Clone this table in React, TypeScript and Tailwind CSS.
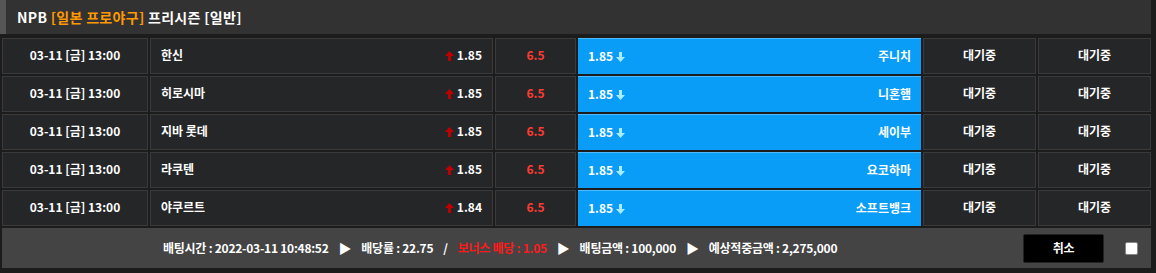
import React from "react";

type Game = {
  time: string;
  home: string;
  homeOdds: string;
  line: string;
  awayOdds: string;
  away: string;
};

const games: Game[] = [
  { time: "03-11 [금] 13:00", home: "한신", homeOdds: "1.85", line: "6.5", awayOdds: "1.85", away: "주니치" },
  { time: "03-11 [금] 13:00", home: "히로시마", homeOdds: "1.85", line: "6.5", awayOdds: "1.85", away: "니혼햄" },
  { time: "03-11 [금] 13:00", home: "지바 롯데", homeOdds: "1.85", line: "6.5", awayOdds: "1.85", away: "세이부" },
  { time: "03-11 [금] 13:00", home: "라쿠텐", homeOdds: "1.85", line: "6.5", awayOdds: "1.85", away: "요코하마" },
  { time: "03-11 [금] 13:00", home: "야쿠르트", homeOdds: "1.84", line: "6.5", awayOdds: "1.85", away: "소프트뱅크" },
];

function UpArrow() {
  return (
    <svg width="9" height="10" viewBox="0 0 9 10" className="mt-[2px]">
      <path d="M4.5 0 L9 5 L6 5 L6 10 L3 10 L3 5 L0 5 Z" fill="#c00000" />
    </svg>
  );
}

function DownArrow() {
  return (
    <svg width="9" height="10" viewBox="0 0 9 10" className="mt-[2px]">
      <path d="M4.5 10 L9 5 L6 5 L6 0 L3 0 L3 5 L0 5 Z" fill="#a8ecff" />
    </svg>
  );
}

function Play() {
  return <span className="mx-[10px] text-[13px]">▶</span>;
}

const cell = "h-full bg-[#252628] border border-[#3a3a3a] flex items-center pb-[2px]";

export default function App() {
  return (
    <div
      className="w-[1156px] h-[273px] bg-[#1c1c1c] text-white text-[12px] font-semibold overflow-hidden"
      style={{ fontFamily: '"Noto Sans CJK KR", "Noto Sans", sans-serif' }}
    >
      <div className="w-[1151px] h-[34px] bg-[#323232] border-l-[6px] border-[#555555] flex items-center pl-[11px] text-[14px] font-bold tracking-[0.3px]">
        <span>NPB&nbsp;</span>
        <span className="text-[#ff9900]">[일본 프로야구]</span>
        <span>&nbsp;프리시즌 [일반]</span>
      </div>

      <div className="w-[1151px] pl-[2px] pt-[4px] flex flex-col gap-[2px]">
        {games.map((g, i) => (
          <div key={i} className="h-[36px] flex gap-[2px]">
            <div className={`${cell} w-[146px] justify-center`}>{g.time}</div>
            <div className={`${cell} w-[343px] justify-between px-[10px]`}>
              <span>{g.home}</span>
              <span className="flex items-center gap-[3px]">
                <UpArrow />
                {g.homeOdds}
              </span>
            </div>
            <div className={`${cell} w-[81px] justify-center text-[#ff3b30]`}>{g.line}</div>
            <div className="h-full w-[343px] bg-[#0a9df7] border-t border-[#4fbaff] flex items-center justify-between px-[10px] pb-[2px]">
              <span className="flex items-center gap-[3px]">
                {g.awayOdds}
                <DownArrow />
              </span>
              <span>{g.away}</span>
            </div>
            <div className={`${cell} w-[113px] justify-center`}>대기중</div>
            <div className={`${cell} w-[113px] justify-center`}>대기중</div>
          </div>
        ))}
      </div>

      <div className="ml-[2px] mt-[2px] w-[1149px] h-[40px] bg-[#444444] flex items-center pl-[161px] tracking-[-0.25px]">
        <span>배팅시간 : 2022-03-11 10:48:52</span>
        <Play />
        <span>배당률 : 22.75</span>
        <span className="mx-[10px]">/</span>
        <span className="text-[#ff1a1a]">보너스 배당 : 1.05</span>
        <Play />
        <span>배팅금액 : 100,000</span>
        <Play />
        <span>예상적중금액 : 2,275,000</span>
        <button className="ml-auto w-[81px] h-[29px] bg-black border border-[#222] rounded-[2px] text-white text-[12px] font-semibold">
          취소
        </button>
        <span className="ml-[21px] mr-[13px] w-[13px] h-[13px] bg-white border border-[#888] rounded-[2px]" />
      </div>
    </div>
  );
}
